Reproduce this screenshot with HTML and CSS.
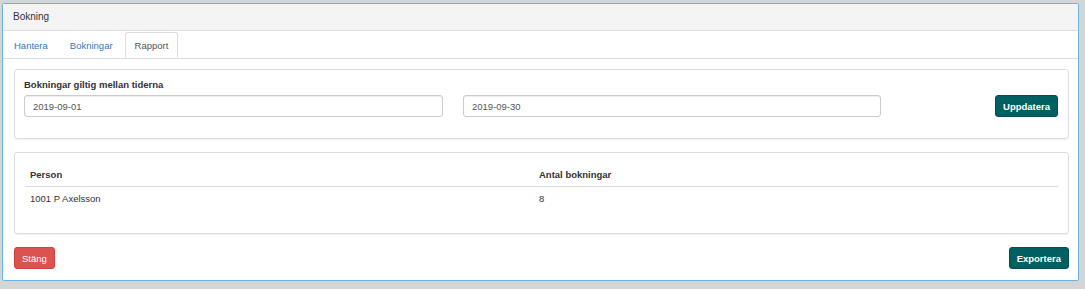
FILE: index.html
```html
<!DOCTYPE html>
<html lang="sv">
<head>
    <meta charset="UTF-8">
    <title>Bokning</title>
    <link rel="stylesheet" href="styles.css">
</head>
<body>
    <div class="panel">
        <div class="panel-heading">Bokning</div>
        <ul class="tabs">
            <li><a href="#">Hantera</a></li>
            <li><a href="#">Bokningar</a></li>
            <li class="active"><a href="#">Rapport</a></li>
        </ul>
        <div class="panel-body">
            <!-- Filter -->
            <div class="well">
                <label class="filter-label">Bokningar giltig mellan tiderna</label>
                <div class="filter-row">
                    <input type="text" class="field" value="2019-09-01">
                    <input type="text" class="field" value="2019-09-30">
                    <button class="btn btn-teal">Uppdatera</button>
                </div>
            </div>

            <!-- Resultat -->
            <div class="well well-table">
                <table class="report">
                    <thead>
                        <tr><th class="col-person">Person</th><th>Antal bokningar</th></tr>
                    </thead>
                    <tbody>
                        <tr><td>1001 P Axelsson</td><td>8</td></tr>
                    </tbody>
                </table>
            </div>

            <div class="footer">
                <button class="btn btn-red">Stäng</button>
                <button class="btn btn-teal">Exportera</button>
            </div>
        </div>
    </div>
</body>
</html>
```

FILE: styles.css
```css
body {
    margin: 0;
    padding: 3px 6px 0 2px;
    background: #d5d5d5;
    font-family: 'Liberation Sans', Arial, sans-serif;
    font-size: 9.5px;
    color: #333;
}
.panel {
    background: #fff;
    border: 1px solid #66b5ea;
    border-radius: 2px;
    height: 278px;
    box-sizing: border-box;
}
.panel-heading {
    background: #f4f4f4;
    border-bottom: 1px solid #ddd;
    height: 26px;
    line-height: 26px;
    padding: 0 10px;
    font-size: 10px;
}
.tabs {
    list-style: none;
    margin: 0;
    padding: 1px 0 0 1px;
    display: flex;
    border-bottom: 1px solid #ddd;
    height: 26px;
}
.tabs li {
    margin-bottom: -1px;
}
.tabs a {
    display: block;
    height: 26px;
    line-height: 25px;
    padding: 0 9px;
    color: #337ab7;
    text-decoration: none;
    border: 1px solid transparent;
    border-radius: 3px 3px 0 0;
    box-sizing: border-box;
    margin-right: 2px;
}
.tabs .active a {
    color: #555;
    border-color: #ddd;
    border-bottom-color: #fff;
    background: #fff;
}
.panel-body {
    padding: 10px 9px 10px 11px;
}
.well {
    border: 1px solid #ddd;
    border-radius: 3px;
    box-shadow: 0 1px 1px rgba(0, 0, 0, 0.05);
    padding: 9px 9px 21px 9px;
    margin-bottom: 13px;
}
.filter-label {
    display: block;
    font-weight: bold;
    margin: 0 0 4px;
    height: 12px;
    line-height: 12px;
}
.filter-row {
    display: flex;
    align-items: center;
}
.field {
    width: 419px;
    height: 22px;
    box-sizing: border-box;
    border: 1px solid #ccc;
    border-radius: 3px;
    padding: 0 8px;
    font-family: inherit;
    font-size: 9.5px;
    color: #555;
    margin-right: 20px;
    box-shadow: inset 0 1px 1px rgba(0, 0, 0, 0.075);
}
.field + .field {
    width: 418px;
}
.filter-row .btn {
    margin-left: auto;
    margin-right: 1px;
}
.btn {
    height: 22px;
    padding: 0 7px;
    border: 1px solid transparent;
    border-radius: 3px;
    font-family: inherit;
    font-size: 9.5px;
    color: #fff;
    cursor: pointer;
}
.btn-teal {
    background: #005f61;
    border-color: #004f51;
    font-weight: bold;
}
.btn-red {
    background: #d9534f;
    border-color: #d43f3a;
}
.well-table {
    padding: 9px 10px 23px 10px;
    margin-bottom: 13px;
}
.report {
    width: 100%;
    border-collapse: collapse;
}
.report th {
    text-align: left;
    font-weight: bold;
    padding: 7px 5px 5px;
    border-bottom: 1px solid #ddd;
    line-height: 12px;
}
.report td {
    padding: 6px 5px 5px;
    line-height: 12px;
}
.col-person {
    width: 499px;
}
.footer {
    display: flex;
    justify-content: space-between;
}
```
